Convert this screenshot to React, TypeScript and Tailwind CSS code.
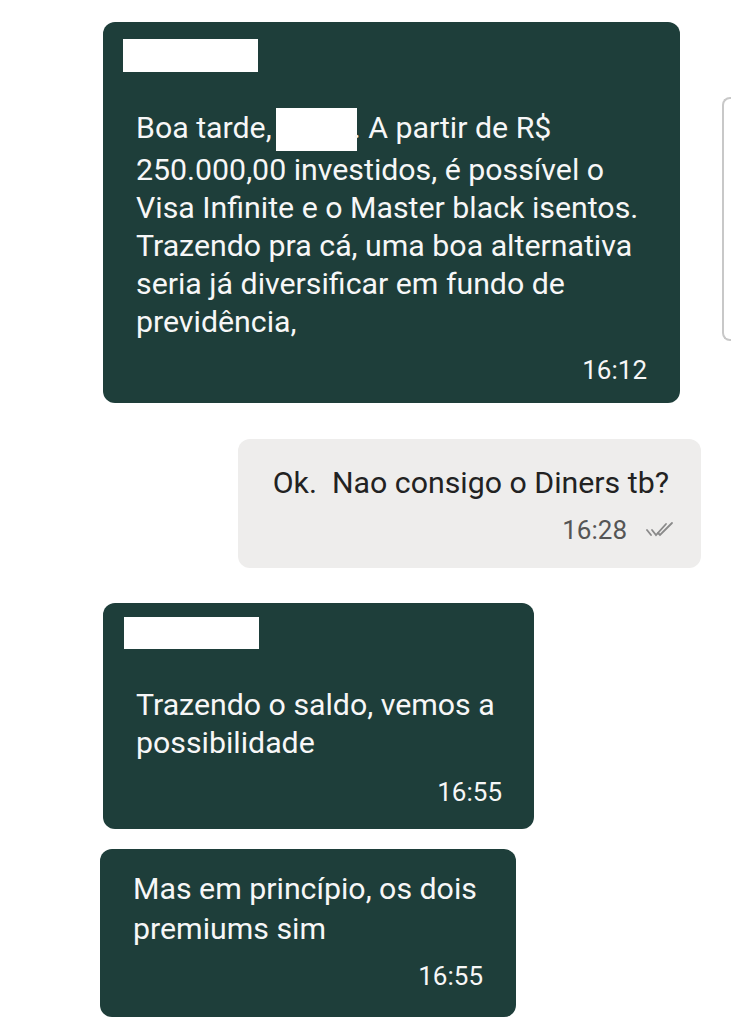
const font = "font-['Roboto',_'Liberation_Sans',_sans-serif]"

const Redacted = ({ className }: { className: string }) => <div className={`bg-white ${className}`} />

const Line = ({ children }: { children: React.ReactNode }) => (
  <div className="whitespace-nowrap">{children}</div>
)

const DoubleCheck = () => (
  <svg width="30" height="18" viewBox="0 0 30 18" fill="none" stroke="#8a8a8a" strokeWidth="1.8" strokeLinecap="round">
    <path d="M2 9 L6 14" />
    <path d="M7 9 L11 14 L21 3" />
    <path d="M13 12 L15 14 L27 2" />
  </svg>
)

export default function App() {
  return (
    <div className={`relative w-[731px] h-[1024px] overflow-hidden bg-white ${font}`}>
      <div className="flex flex-col items-start">
        <div className="mt-[22px] ml-[103px] w-[577px] h-[381px] rounded-[12px] bg-[#1e3e3a] text-[#f7f7f7] text-[30.3px] leading-[38px] pt-[17px]">
          <Redacted className="ml-[20px] w-[135px] h-[33px]" />
          <div className="mt-[36px] pl-[33px]">
            <Line>
              Boa tarde,
              <span className="inline-block align-middle bg-white w-[81px] h-[43px] ml-[4px] -mr-[4px]" />
              . A partir de R$
            </Line>
            <Line>250.000,00 investidos, é possível o</Line>
            <Line>Visa Infinite e o Master black isentos.</Line>
            <Line>Trazendo pra cá, uma boa alternativa</Line>
            <Line>seria já diversificar em fundo de</Line>
            <Line>previdência,</Line>
          </div>
          <div className="mt-[10px] pr-[33px] text-right text-[26px]">16:12</div>
        </div>

        <div className="mt-[36px] ml-[238px] w-[463px] h-[129px] rounded-[12px] bg-[#eeedec] text-[#222222] text-[30.3px] leading-[38px] pt-[25px] pr-[32px]">
          <div className="text-right whitespace-pre">Ok.  Nao consigo o Diners tb?</div>
          <div className="mt-[9px] flex items-center justify-end text-[#555555] text-[26px]">
            <span>16:28</span>
            <span className="ml-[18px] -mr-[6px]">
              <DoubleCheck />
            </span>
          </div>
        </div>

        <div className="mt-[35px] ml-[103px] w-[431px] h-[226px] rounded-[12px] bg-[#1e3e3a] text-[#f7f7f7] text-[30.3px] leading-[38px] pt-[14px]">
          <Redacted className="ml-[21px] w-[135px] h-[32px]" />
          <div className="mt-[37px] pl-[33px]">
            <Line>Trazendo o saldo, vemos a</Line>
            <Line>possibilidade</Line>
          </div>
          <div className="mt-[11px] pr-[32px] text-right text-[26px]">16:55</div>
        </div>

        <div className="mt-[20px] ml-[100px] w-[416px] h-[168px] rounded-[12px] bg-[#1e3e3a] text-[#f7f7f7] text-[30.3px] leading-[40px] pt-[20px]">
          <div className="pl-[33px]">
            <Line>Mas em princípio, os dois</Line>
            <Line>premiums sim</Line>
          </div>
          <div className="mt-[7px] pr-[33px] text-right text-[26px]">16:55</div>
        </div>
      </div>

      <div className="absolute left-[722px] top-[97px] w-[12px] h-[244px] rounded-l-[8px] border-2 border-r-0 border-[#c8c8c8]" />
    </div>
  )
}
